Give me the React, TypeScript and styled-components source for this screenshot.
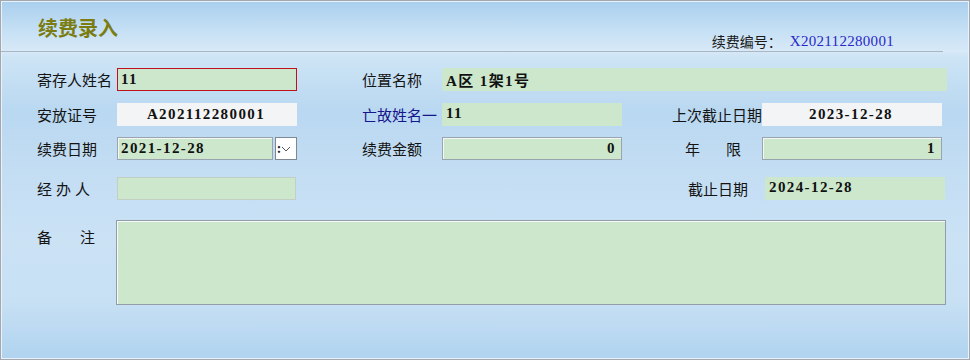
import React from 'react';
import styled, { createGlobalStyle } from 'styled-components';

const GlobalStyle = createGlobalStyle`
    html, body {
        margin: 0;
        padding: 0;
    }
    body {
        font-family: "Noto Sans CJK SC", "Noto Sans", sans-serif;
    }
`;

const RenewalEntry = () => {
    return (
        <Frame>
            <GlobalStyle />
            <Header>
                <Title>续费录入</Title>
                <SerialBox>
                    <SerialLabel>续费编号：</SerialLabel>
                    <SerialNumber>X202112280001</SerialNumber>
                </SerialBox>
            </Header>

            <Form>
                <Row $top={16}>
                    <Label>寄存人姓名</Label>
                    <Field $variant="error">11</Field>
                    <Label $indent={65}>位置名称</Label>
                    <Field $span="4 / 7" $right={-5}>
                        A区 1架1号
                    </Field>
                </Row>

                <Row $top={12}>
                    <Label>安放证号</Label>
                    <Field $variant="readonly" $align="center">
                        A202112280001
                    </Field>
                    <Label $indent={65} $color="#16168c">
                        亡故姓名一
                    </Label>
                    <Field $valign="top">11</Field>
                    <Label $indent={50}>上次截止日期</Label>
                    <Field $variant="readonly" $align="center">
                        2023-12-28
                    </Field>
                </Row>

                <Row $top={11}>
                    <Label>续费日期</Label>
                    <DateWrap>
                        <Field $variant="bordered">2021-12-28</Field>
                        <DropButton>
                            <Caret>:</Caret>
                            <svg width="10" height="6" viewBox="0 0 10 6">
                                <path
                                    d="M1 1 L5 5 L9 1"
                                    fill="none"
                                    stroke="#555"
                                    strokeWidth="1"
                                />
                            </svg>
                        </DropButton>
                    </DateWrap>
                    <Label $indent={65}>续费金额</Label>
                    <Field $variant="bordered" $align="right">
                        0
                    </Field>
                    <SpreadLabel $indent={63} $width={56}>
                        <span>年</span>
                        <span>限</span>
                    </SpreadLabel>
                    <Field $variant="bordered" $align="right">
                        1
                    </Field>
                </Row>

                <Row $top={17}>
                    <SpreadLabel $width={53}>
                        <span>经</span>
                        <span>办</span>
                        <span>人</span>
                    </SpreadLabel>
                    <Field $variant="soft" $right={1} />
                    <Label $indent={66} $col="5">
                        截止日期
                    </Label>
                    <Field $valign="top" $left={3} $right={-3}>
                        2024-12-28
                    </Field>
                </Row>

                <Row $top={20}>
                    <SpreadLabel $width={58} $valign="top">
                        <span>备</span>
                        <span>注</span>
                    </SpreadLabel>
                    <Remarks />
                </Row>
            </Form>
        </Frame>
    );
};

export default function App() {
    return <RenewalEntry />;
}

const Frame = styled.div`
    width: 970px;
    height: 360px;
    box-sizing: border-box;
    border: 1px solid #a3a8ae;
    box-shadow: inset 0 0 0 1px #e9f2fa;
    overflow: hidden;
    background: linear-gradient(
        180deg,
        #a9cfee 0px,
        #c4dff4 28px,
        #d8e9f7 50px,
        #cde4f5 56px,
        #b9d8f1 110px,
        #c3ddf3 170px,
        #cbe2f5 240px,
        #c7e0f4 300px,
        #b0d3ef 358px
    );
`;

const Header = styled.div`
    display: flex;
    align-items: flex-start;
    height: 51px;
    box-sizing: border-box;
    margin-right: 26px;
    padding-left: 37px;
    border-bottom: 1px solid #a9b6c3;
`;

const Title = styled.h1`
    margin: 0;
    padding-top: 14px;
    font-size: 20px;
    line-height: 26px;
    font-weight: bold;
    color: #7b7c12;
`;

const SerialBox = styled.div`
    margin-left: auto;
    margin-right: 49px;
    padding-top: 30px;
    display: flex;
    align-items: center;
    gap: 8px;
    line-height: 20px;
`;

const SerialLabel = styled.span`
    font-size: 14px;
    color: #1a1a1a;
`;

const SerialNumber = styled.span`
    font-family: "Liberation Serif", serif;
    font-size: 15px;
    letter-spacing: 0.3px;
    color: #2828c8;
`;

const Form = styled.div`
    padding-left: 36px;
`;

const Row = styled.div<{ $top: number }>`
    display: grid;
    grid-template-columns: 80px 180px 145px 180px 140px 180px;
    align-items: stretch;
    margin-top: ${(p) => p.$top}px;
`;

const Label = styled.div<{ $indent?: number; $color?: string; $col?: string }>`
    display: flex;
    align-items: center;
    padding-left: ${(p) => p.$indent || 0}px;
    font-size: 15px;
    white-space: nowrap;
    color: ${(p) => p.$color || '#141414'};
    ${(p) => (p.$col ? `grid-column: ${p.$col};` : '')}
`;

const SpreadLabel = styled.div<{ $indent?: number; $width: number; $valign?: string }>`
    display: flex;
    justify-content: space-between;
    align-items: ${(p) => (p.$valign === 'top' ? 'flex-start' : 'center')};
    padding-top: ${(p) => (p.$valign === 'top' ? 6 : 0)}px;
    margin-left: ${(p) => p.$indent || 0}px;
    width: ${(p) => p.$width}px;
    font-size: 15px;
    color: #141414;
`;

type FieldProps = {
    $variant?: 'plain' | 'error' | 'readonly' | 'bordered' | 'soft';
    $align?: 'left' | 'center' | 'right';
    $valign?: 'top' | 'center';
    $span?: string;
    $left?: number;
    $right?: number;
};

const borders: Record<string, string> = {
    plain: '1px solid transparent',
    error: '1px solid #c0101c',
    readonly: '1px solid transparent',
    bordered: '1px solid #9aa4ae',
    soft: '1px solid #c4cfc4',
};

const Field = styled.div<FieldProps>`
    height: 23px;
    box-sizing: border-box;
    display: flex;
    align-items: ${(p) => (p.$valign === 'top' ? 'flex-start' : 'center')};
    justify-content: ${(p) =>
        p.$align === 'center' ? 'center' : p.$align === 'right' ? 'flex-end' : 'flex-start'};
    padding: 0 5px 0 3px;
    padding-top: ${(p) => (p.$valign === 'top' ? 1 : 0)}px;
    margin-left: ${(p) => p.$left || 0}px;
    margin-right: ${(p) => p.$right || 0}px;
    ${(p) => (p.$span ? `grid-column: ${p.$span};` : '')}
    background: ${(p) => (p.$variant === 'readonly' ? '#f3f4f5' : '#cce7cb')};
    border: ${(p) => borders[p.$variant || 'plain']};
    box-shadow: ${(p) =>
        p.$variant === 'bordered' ? 'inset 1px 1px 0 #f4f8f4' : 'none'};
    font-family: "Liberation Serif", "Noto Sans CJK SC", serif;
    font-weight: bold;
    font-size: 15px;
    letter-spacing: 1.4px;
    color: #111;
    white-space: nowrap;
`;

const DateWrap = styled.div`
    display: grid;
    grid-template-columns: 156px 22px;
    gap: 2px;
`;

const DropButton = styled.div`
    height: 23px;
    box-sizing: border-box;
    display: flex;
    align-items: center;
    justify-content: center;
    position: relative;
    background: #ffffff;
    border: 1px solid #7d8893;
`;

const Caret = styled.span`
    position: absolute;
    left: 1px;
    top: 2px;
    font-size: 12px;
    line-height: 16px;
    font-weight: bold;
    color: #222;
`;

const Remarks = styled.div`
    grid-column: 2 / 7;
    height: 85px;
    margin-left: -1px;
    margin-right: -4px;
    box-sizing: border-box;
    background: #cce7cb;
    border: 1px solid #929da8;
    box-shadow: inset 1px 1px 0 #f6faf6;
`;
